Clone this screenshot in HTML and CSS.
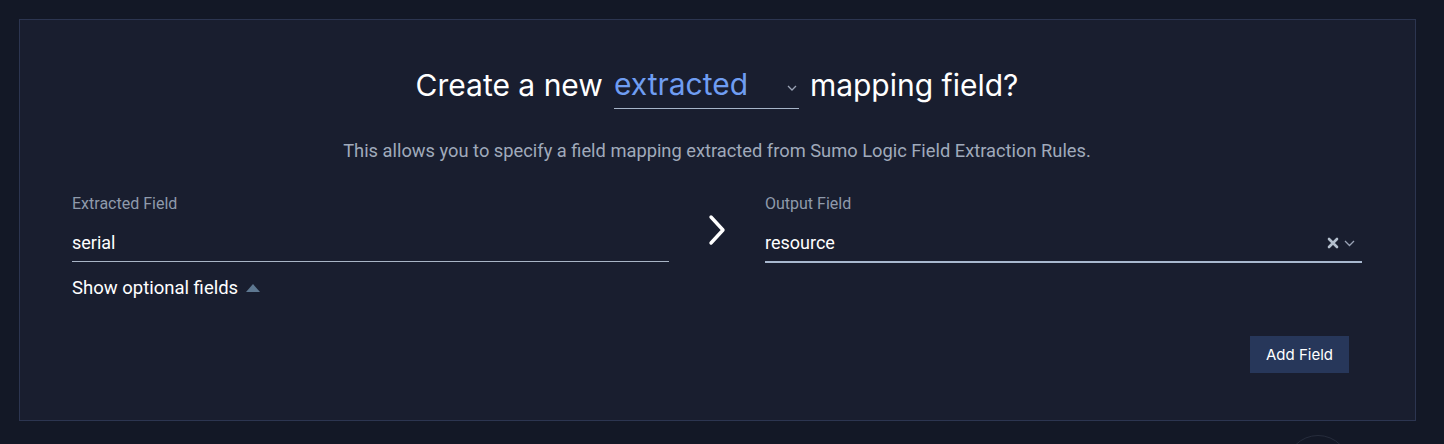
FILE: index.html
```html
<!DOCTYPE html>
<html>
<head>
<meta charset="utf-8">
<link rel="stylesheet" href="styles.css">
</head>
<body>
<div class="page">
  <section class="panel">
    <h1 class="title">
      <span>Create a new</span>
      <span class="select">
        <span class="select-value">extracted</span>
        <svg class="select-caret" width="10" height="6" viewBox="0 0 10 6"><path d="M1 1l4 4 4-4" fill="none" stroke="#9aa3b5" stroke-width="1.3"/></svg>
      </span>
      <span>mapping field?</span>
    </h1>
    <p class="desc">This allows you to specify a field mapping extracted from Sumo Logic Field Extraction Rules.</p>
    <div class="fields">
      <div class="field">
        <div class="label">Extracted Field</div>
        <div class="input">serial</div>
        <div class="optional">Show optional fields <span class="tri"></span></div>
      </div>
      <div class="arrow">
        <svg width="20" height="32" viewBox="0 0 20 32"><path d="M4 3l12 13L4 29" fill="none" stroke="#ffffff" stroke-width="3.4" stroke-linecap="round" stroke-linejoin="round"/></svg>
      </div>
      <div class="field">
        <div class="label">Output Field</div>
        <div class="input focused">
          <span>resource</span>
          <span class="icons">
            <svg width="12" height="12" viewBox="0 0 12 12"><path d="M2 2l8 8M10 2l-8 8" stroke="#b4bfcd" stroke-width="2.6" stroke-linecap="round"/></svg>
            <svg width="11" height="7" viewBox="0 0 11 7"><path d="M1 1l4.5 4.5L10 1" fill="none" stroke="#9aa3b5" stroke-width="1.3"/></svg>
          </span>
        </div>
      </div>
    </div>
    <div class="actions">
      <button class="btn">Add Field</button>
    </div>
  </section>
  <div class="fab"></div>
</div>
</body>
</html>
```
FILE: styles.css
```css
html, body {
  margin: 0;
  padding: 0;
  background: #131826;
  height: 100%;
  overflow: hidden;
}
body {
  font-family: Roboto, "Liberation Sans", sans-serif;
  color: #ffffff;
}
.page {
  position: relative;
  padding: 19px 28px 0 19px;
  height: 444px;
  box-sizing: border-box;
  overflow: hidden;
}
.panel {
  background: #191e2f;
  border: 1px solid #2c3550;
  height: 402px;
  box-sizing: border-box;
  padding: 0 53px 0 52px;
}
.title {
  margin: 0;
  padding-top: 45px;
  display: flex;
  justify-content: center;
  align-items: flex-end;
  gap: 11px;
  font-family: Inter, "Open Sans", sans-serif;
  font-weight: 400;
  font-size: 30px;
  line-height: 40px;
  color: #ffffff;
}
.select {
  display: flex;
  align-items: center;
  width: 185px;
  border-bottom: 1px solid #a6b4c8;
  height: 41px;
  box-sizing: border-box;
  margin-bottom: -2px;
  position: relative;
  top: 2px;
}
.select-value {
  color: #6f9df2;
  flex: 1;
  position: relative;
  top: -4px;
}
.select-caret {
  margin-right: 2px;
}
.desc {
  margin: 34px 0 0;
  text-align: center;
  font-size: 18.3px;
  line-height: 24px;
  color: #a0aabb;
}
.fields {
  display: grid;
  grid-template-columns: 1fr 96px 1fr;
  margin-top: 31px;
}
.label {
  font-size: 16px;
  line-height: 20px;
  color: #8f9aab;
}
.input {
  margin-top: 17px;
  font-size: 18px;
  line-height: 24px;
  padding-bottom: 6px;
  border-bottom: 1px solid #a9b5c6;
  display: flex;
  align-items: center;
  justify-content: space-between;
}
.input.focused {
  border-bottom: 2px solid #a8b8cf;
}
.icons {
  display: flex;
  align-items: center;
  gap: 5px;
  margin-right: 7px;
}
.optional {
  margin-top: 14px;
  font-size: 18.5px;
  line-height: 24px;
  color: #ffffff;
  display: flex;
  align-items: center;
  gap: 8px;
}
.tri {
  width: 0;
  height: 0;
  border-left: 7px solid transparent;
  border-right: 7px solid transparent;
  border-bottom: 8px solid #5e7891;
}
.arrow {
  display: flex;
  justify-content: center;
  align-items: flex-start;
  padding-top: 20px;
}
.actions {
  display: flex;
  justify-content: flex-end;
  margin-top: 36px;
  padding-right: 13px;
}
.btn {
  background: #27375a;
  color: #ffffff;
  border: none;
  font-family: Inter, "Open Sans", sans-serif;
  font-size: 15px;
  height: 37px;
  width: 99px;
  padding: 0;
}
.fab {
  position: absolute;
  left: 1286px;
  top: 435px;
  width: 64px;
  height: 64px;
  border-radius: 50%;
  border: 1px solid #262c3c;
  box-sizing: border-box;
}
```
